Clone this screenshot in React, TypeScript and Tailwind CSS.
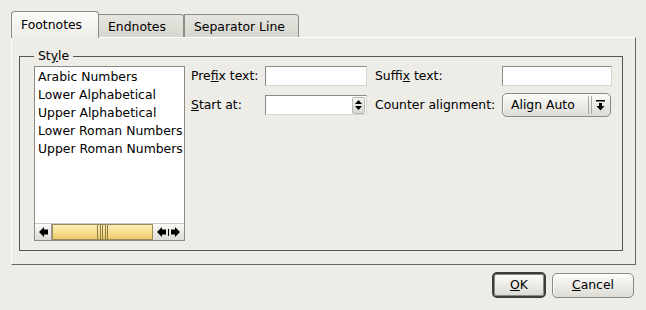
import React from 'react';

const ITEMS = ['Arabic Numbers', 'Lower Alphabetical', 'Upper Alphabetical', 'Lower Roman Numbers', 'Upper Roman Numbers'];

const LeftArrow = () => (
  <svg width="9" height="10" viewBox="0 0 9 10">
    <path d="M0 5 L5 0 V2.5 H9 V7.5 H5 V10 Z" fill="#000" />
  </svg>
);

const RightArrow = () => (
  <svg width="9" height="10" viewBox="0 0 9 10">
    <path d="M9 5 L4 0 V2.5 H0 V7.5 H4 V10 Z" fill="#000" />
  </svg>
);

const Spinner = () => (
  <div className="w-[13px] h-[17px] bg-gradient-to-b from-[#f4f3ef] to-[#d8d7d0] border border-[#b8b7b0] rounded-[2px] flex flex-col items-center justify-center gap-[2px]">
    <svg width="7" height="4" viewBox="0 0 7 4"><path d="M0 4 L3.5 0 L7 4 Z" fill="#000" /></svg>
    <svg width="7" height="4" viewBox="0 0 7 4"><path d="M0 0 L3.5 4 L7 0 Z" fill="#000" /></svg>
  </div>
);

const TextInput = ({ w }: { w: string }) => (
  <div className={`${w} h-[20px] bg-white border border-t-[#8b8a85] border-l-[#8b8a85] border-r-[#d6d5cf] border-b-[#d6d5cf]`} />
);

export default function App() {
  return (
    <div className="w-[646px] h-[310px] bg-[#edece7] font-['DejaVu_Sans',sans-serif] text-[12.4px] text-black leading-[14px] overflow-hidden">
      {/* Tabs */}
      <div className="flex items-end pl-[11px] pt-[11px] h-[37px]">
        <div className="relative z-10 -mb-px w-[88px] h-[27px] rounded-t-[4px] border border-b-0 border-[#8d8c86] bg-gradient-to-b from-[#fbfbf9] to-[#edece7] flex items-start pl-[9px] pt-[6px]">
          Footnotes
        </div>
        <div className="w-[85px] h-[23px] rounded-tr-[3px] border border-l-0 border-b-0 border-[#8d8c86] bg-gradient-to-b from-[#e6e5df] to-[#d7d6cf] flex items-start pl-[9px] pt-[5px]">
          Endnotes
        </div>
        <div className="w-[115px] h-[23px] rounded-tr-[4px] border border-b-0 border-[#8d8c86] bg-gradient-to-b from-[#e6e5df] to-[#d7d6cf] flex items-start pl-[9px] pt-[5px]">
          Separator Line
        </div>
      </div>

      {/* Panel */}
      <div className="ml-[11px] w-[625px] h-[228px] border border-t-white border-l-white border-r-[#6a6965] border-b-[#6a6965] pl-[7px] pt-[11px]">
        <fieldset className="w-[604px] h-[202px] border border-[#57574f] pl-[14px]">
          <legend className="px-[4px] leading-[14px]">
            St<span className="underline">y</span>le
          </legend>
          <div className="flex pt-[3px]">
            {/* List */}
            <div className="w-[151px] h-[175px] bg-white border border-[#8b8a85] flex flex-col">
              <div className="flex-1 pl-[3px] pt-[1px]">
                {ITEMS.map((it) => (
                  <div key={it} className="h-[18px] flex items-center whitespace-nowrap">{it}</div>
                ))}
              </div>
              <div className="h-[17px] flex items-stretch border-t border-[#c9c8c2] bg-[#edece7]">
                <div className="w-[17px] bg-gradient-to-b from-[#fafaf8] to-[#dedcd6] border-r border-[#9c9b95] flex items-center justify-center">
                  <LeftArrow />
                </div>
                <div className="w-[101px] border border-[#9a8c5c] bg-gradient-to-b from-[#fbeeb8] via-[#f7df90] to-[#eac866] flex items-center justify-center">
                  <div className="w-[13px] h-[15px] flex justify-between px-[1px]">
                    {[0, 1, 2, 3, 4].map((i) => (
                      <div key={i} className="w-px h-full bg-[#8c7d45]" />
                    ))}
                  </div>
                </div>
                <div className="flex-1 bg-gradient-to-b from-[#fafaf8] to-[#dedcd6] flex items-center justify-center gap-[2px]">
                  <LeftArrow />
                  <div className="w-px h-[7px] bg-black" />
                  <RightArrow />
                </div>
              </div>
            </div>

            {/* Fields */}
            <div className="ml-[6px] flex flex-col">
              <div className="flex items-center h-[20px]">
                <span className="w-[74px]">Pre<span className="underline">f</span>ix text:</span>
                <TextInput w="w-[102px]" />
                <span className="ml-[8px] w-[127px]">Suffi<span className="underline">x</span> text:</span>
                <TextInput w="w-[110px]" />
              </div>
              <div className="flex items-center h-[20px] mt-[9px]">
                <span className="w-[74px]"><span className="underline">S</span>tart at:</span>
                <div className="w-[102px] h-[20px] bg-white border border-t-[#8b8a85] border-l-[#8b8a85] border-r-[#d6d5cf] border-b-[#d6d5cf] flex items-center justify-end pr-px">
                  <Spinner />
                </div>
                <span className="ml-[8px] w-[127px] whitespace-nowrap">Counter alignment:</span>
                <div className="w-[109px] h-[24px] rounded-[5px] border border-[#8a8983] bg-gradient-to-b from-[#fcfcfa] to-[#dcdbd4] shadow-[inset_1px_1px_0_#fff] flex items-center pl-[8px] pr-[5px]">
                  <span className="flex-1 whitespace-nowrap">Align Auto</span>
                  <div className="flex gap-[2px] h-[18px] mr-[4px]">
                    <div className="w-px bg-[#a9a8a2]" />
                    <div className="w-px bg-[#a9a8a2]" />
                  </div>
                  <svg width="9" height="11" viewBox="0 0 9 11">
                    <rect x="0" y="0" width="9" height="1.5" fill="#000" />
                    <path d="M3 3 H6 V6 H8.5 L4.5 10.5 L0.5 6 H3 Z" fill="#000" />
                  </svg>
                </div>
              </div>
            </div>
          </div>
        </fieldset>
      </div>

      {/* Buttons */}
      <div className="flex justify-end items-center pr-[12px] pt-[7px] gap-[6px]">
        <div className="w-[54px] h-[26px] rounded-[5px] border-2 border-[#3c3c38] flex">
          <div className="flex-1 rounded-[3px] border border-[#8a8983] bg-gradient-to-b from-[#fcfcfa] to-[#dcdbd4] flex items-center justify-center">
            <span><span className="underline">O</span>K</span>
          </div>
        </div>
        <div className="w-[82px] h-[25px] rounded-[5px] border border-[#8a8983] bg-gradient-to-b from-[#fcfcfa] to-[#dcdbd4] shadow-[inset_1px_1px_0_#fff] flex items-center justify-center">
          <span><span className="underline">C</span>ancel</span>
        </div>
      </div>
    </div>
  );
}
